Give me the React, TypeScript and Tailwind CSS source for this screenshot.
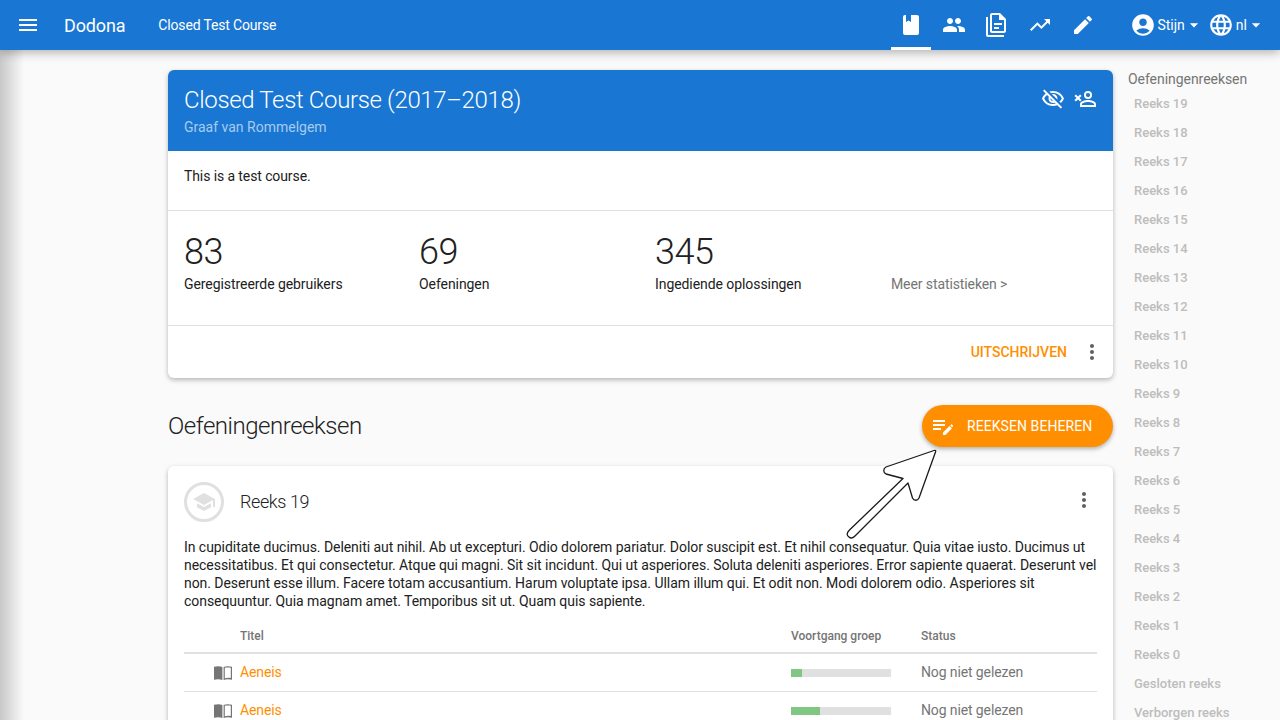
import { MdMenu, MdPeople, MdTrendingUp, MdEdit, MdAccountCircle, MdLanguage, MdArrowDropDown, MdOutlineVisibilityOff, MdMoreVert, MdSchool } from "react-icons/md";

const sidebarItems = ["Reeks 19", "Reeks 18", "Reeks 17", "Reeks 16", "Reeks 15", "Reeks 14", "Reeks 13", "Reeks 12", "Reeks 11", "Reeks 10", "Reeks 9", "Reeks 8", "Reeks 7", "Reeks 6", "Reeks 5", "Reeks 4", "Reeks 3", "Reeks 2", "Reeks 1", "Reeks 0", "Gesloten reeks", "Verborgen reeks"];

const stats = [
  { value: "83", label: "Geregistreerde gebruikers" },
  { value: "69", label: "Oefeningen" },
  { value: "345", label: "Ingediende oplossingen" },
];

const rows = [
  { title: "Aeneis", progress: 11 },
  { title: "Aeneis", progress: 29 },
];

function Mdi({ d, className }: { d: string; className?: string }) {
  return (
    <svg viewBox="0 0 24 24" fill="currentColor" className={className}>
      <path d={d} />
    </svg>
  );
}

function BookIcon() {
  return (
    <svg viewBox="0 0 18 14" className="w-[18px] h-[14px] text-[#757575]" fill="currentColor">
      <path d="M0 .8C2.8.1 6 0 8.4 1v13C6 13 2.8 13 0 13.7z" />
      <path d="M9.6 1C12 0 15.2.1 18 .8v12.9c-2.8-.7-6-.7-8.4.3zm1.2.8v10.4c2-.6 4.3-.7 6-.2V1.8c-1.8-.5-4-.5-6 0z" />
    </svg>
  );
}

export default function App() {
  return (
    <div className="relative h-screen overflow-hidden bg-[#fafafa] text-[14px] text-[#212121] font-['Roboto',sans-serif]">
      {/* drawer shadow on the left edge */}
      <div className="absolute left-0 top-0 bottom-0 w-[24px] bg-gradient-to-r from-[#c8c8c8] to-[#fafafa]" />

      {/* navbar */}
      <header className="relative z-10 h-[50px] bg-[#1976d2] text-white flex items-center shadow-[0_2px_10px_rgba(0,0,0,0.32)]">
        <MdMenu className="ml-[16px] w-[24px] h-[24px]" />
        <span className="ml-[24px] text-[18px] tracking-[-0.15px]">Dodona</span>
        <span className="ml-[33px] text-[14px] tracking-[-0.16px]">Closed Test Course</span>
        <nav className="ml-auto flex h-full gap-[3px]">
          <div className="w-[40px] flex items-center justify-center border-b-[3px] border-white pt-[3px]">
            <Mdi className="w-[24px] h-[24px]" d="M18,22A2,2 0 0,0 20,20V4C20,2.89 19.1,2 18,2H12V9L9.5,7.5L7,9V2H6A2,2 0 0,0 4,4V20A2,2 0 0,0 6,22H18Z" />
          </div>
          <div className="w-[40px] flex items-center justify-center"><MdPeople className="w-[24px] h-[24px]" /></div>
          <div className="w-[40px] -ml-[1px] flex items-center justify-center">
            <Mdi className="w-[24px] h-[24px]" d="M16 0H8C6.9 0 6 .9 6 2V18C6 19.1 6.9 20 8 20H20C21.1 20 22 19.1 22 18V6L16 0M20 18H8V2H15V7H20V18M4 4V22H20V24H4C2.9 24 2 23.1 2 22V4H4M10 10V12H18V10H10M10 14V16H15V14H10Z" />
          </div>
          <div className="w-[40px] ml-[1px] flex items-center justify-center"><MdTrendingUp className="w-[24px] h-[24px]" /></div>
          <div className="w-[40px] flex items-center justify-center"><MdEdit className="w-[24px] h-[24px]" /></div>
        </nav>
        <div className="ml-[28px] flex items-center">
          <MdAccountCircle className="w-[26px] h-[26px] -mx-[1px]" />
          <span className="ml-[2px] text-[14px]">Stijn</span>
          <MdArrowDropDown className="w-[20px] h-[20px] -ml-[1px] -mr-[5px]" />
        </div>
        <div className="ml-[10px] mr-[19px] flex items-center">
          <MdLanguage className="w-[26px] h-[26px] -mx-[1px]" />
          <span className="ml-[3px] text-[14px]">nl</span>
          <MdArrowDropDown className="w-[20px] h-[20px] -ml-[1px] -mr-[5px]" />
        </div>
      </header>

      <div className="relative flex pl-[168px] pt-[20px]">
        <main className="w-[945px] shrink-0">
          {/* course card */}
          <section className="rounded-[6px] bg-white shadow-[0_2px_5px_rgba(0,0,0,0.28)] overflow-hidden">
            <div className="h-[81px] bg-[#1976d2] text-white px-[16px] pt-[14px] flex justify-between">
              <div>
                <h1 className="text-[24px] font-light leading-[32px] tracking-[-0.35px]">Closed Test Course (2017–2018)</h1>
                <p className="text-[14px] leading-[20px] mt-[1px] text-[#a6cbf0]">Graaf van Rommelgem</p>
              </div>
              <div className="flex gap-[8px] h-[24px] mt-[3px]">
                <MdOutlineVisibilityOff className="w-[24px] h-[24px]" />
                <Mdi className="w-[24px] h-[24px]" d="M15,4A4,4 0 0,0 11,8A4,4 0 0,0 15,12A4,4 0 0,0 19,8A4,4 0 0,0 15,4M15,5.9C16.16,5.9 17.1,6.84 17.1,8C17.1,9.16 16.16,10.1 15,10.1A2.1,2.1 0 0,1 12.9,8A2.1,2.1 0 0,1 15,5.9M15,13C12.33,13 7,14.33 7,17V20H23V17C23,14.33 17.67,13 15,13M15,14.9C17.97,14.9 21.1,16.36 21.1,17V18.1H8.9V17C8.9,16.36 12,14.9 15,14.9M1.46,8.88L2.88,7.46L5,9.59L7.12,7.46L8.54,8.88L6.41,11L8.54,13.12L7.12,14.54L5,12.41L2.88,14.54L1.46,13.12L3.59,11L1.46,8.88Z" />
              </div>
            </div>
            <div className="h-[60px] px-[16px] pt-[15px] leading-[20px] tracking-[-0.1px] border-b border-[#e0e0e0]">This is a test course.</div>
            <div className="h-[115px] grid grid-cols-[235px_236px_236px_1fr] border-b border-[#e0e0e0]">
              {stats.map((s) => (
                <div key={s.label} className="pl-[16px] pt-[21px]">
                  <div className="text-[36px] font-light leading-[40px] tracking-[-0.5px]">{s.value}</div>
                  <div className="-mt-[2px] leading-[28px] tracking-[-0.07px]">{s.label}</div>
                </div>
              ))}
              <div className="pl-[16px] pt-[59px] leading-[28px] text-[#757575] tracking-[-0.1px]">Meer statistieken &gt;</div>
            </div>
            <div className="h-[52px] flex items-center justify-end pr-[9px]">
              <span className="font-medium text-[#ff8f00]">UITSCHRIJVEN</span>
              <MdMoreVert className="ml-[13px] w-[24px] h-[24px] text-[#616161]" />
            </div>
          </section>

          {/* section header */}
          <div className="mt-[27px] h-[42px] flex items-center justify-between">
            <h2 className="text-[24px] font-light tracking-[-0.47px]">Oefeningenreeksen</h2>
            <button className="w-[191px] h-[42px] rounded-full bg-[#ff8f00] text-white flex items-center pl-[9px] shadow-[0_2px_4px_rgba(0,0,0,0.3)]">
              <svg viewBox="0 0 22 22" className="w-[22px] h-[22px]" fill="currentColor">
                <path d="M2 5h12v2H2zM2 9h12v2H2zM2 13h8v2H2z" />
                <path d="M12 20v-2.4l6.5-6.5 2.4 2.4-6.5 6.5zM19.2 10.4l1-1c.3-.3.6-.3.8 0l1 1c.3.3.3.5 0 .8l-1 1z" />
              </svg>
              <span className="ml-[14px] text-[14px] tracking-[0.07px]">REEKSEN BEHEREN</span>
            </button>
          </div>

          {/* series card */}
          <section className="mt-[19px] rounded-[6px] bg-white shadow-[0_2px_5px_rgba(0,0,0,0.28)] px-[16px] pt-[16px] pb-[40px]">
            <div className="flex items-center h-[40px]">
              <div className="w-[40px] h-[40px] rounded-full border-[3px] border-[#e0e0e0] flex items-center justify-center">
                <MdSchool className="w-[24px] h-[24px] text-[#e0e0e0]" />
              </div>
              <h3 className="ml-[16px] text-[18px] font-light tracking-[-0.4px] -mt-[1px]">Reeks 19</h3>
              <MdMoreVert className="ml-auto w-[24px] h-[24px] -mt-[4px] mr-[1px] text-[#616161]" />
            </div>
            <p className="mt-[16px] leading-[18px] tracking-[-0.05px] text-[#212121]">
              In cupiditate ducimus. Deleniti aut nihil. Ab ut excepturi. Odio dolorem pariatur. Dolor suscipit est. Et nihil consequatur. Quia vitae iusto. Ducimus ut necessitatibus. Et qui consectetur. Atque qui magni. Sit sit incidunt. Qui ut asperiores. Soluta deleniti asperiores. Error sapiente quaerat. Deserunt vel non. Deserunt esse illum. Facere totam accusantium. Harum voluptate ipsa. Ullam illum qui. Et odit non. Modi dolorem odio. Asperiores sit consequuntur. Quia magnam amet. Temporibus sit ut. Quam quis sapiente.
            </p>
            <div className="mt-[8px]">
              <div className="h-[36px] pt-[2px] flex items-center border-b-2 border-[#e0e0e0] text-[12px] font-medium text-[#757575]">
                <span className="ml-[56px] w-[551px]">Titel</span>
                <span className="w-[130px]">Voortgang groep</span>
                <span>Status</span>
              </div>
              {rows.map((r, i) => (
                <div key={i} className="h-[38px] flex items-center border-b border-[#e0e0e0]">
                  <div className="w-[48px] flex justify-end"><BookIcon /></div>
                  <span className="ml-[8px] text-[#ff8f00] w-[551px] tracking-[-0.1px]">{r.title}</span>
                  <div className="w-[100px] h-[8px] bg-[#e0e0e0]">
                    <div className="h-full bg-[#81c784]" style={{ width: `${r.progress}%` }} />
                  </div>
                  <span className="ml-[30px] text-[#757575] tracking-[-0.12px]">Nog niet gelezen</span>
                </div>
              ))}
            </div>
          </section>
        </main>

        {/* series nav */}
        <aside className="ml-[15px] -mt-[1px] w-[137px]">
          <div className="text-[#757575] leading-[20px] tracking-[-0.05px]">Oefeningenreeksen</div>
          <ul>
            {sidebarItems.map((s) => (
              <li key={s} className="h-[29px] leading-[29px] pl-[6px] text-[13px] font-medium text-[#bdbdbd]">{s}</li>
            ))}
          </ul>
        </aside>
      </div>

      {/* arrow pointing at the button */}
      <svg className="absolute left-[840px] top-[440px] w-[110px] h-[110px] z-20" viewBox="0 0 110 110" fill="none">
        <path
          d="M94 10.5 L46 27 C43 28.5 43 32.5 46 34 L63 38.5 L9.5 90 C6 93.5 7 95.5 9 97 C10.5 98.5 12.5 98.5 15 96 L68 43 L72.5 58 C74 61 77.5 61 79 58 L95.5 12 C96 10.5 95.5 10 94 10.5 Z"
          fill="#ffffff"
          stroke="#1a1a1a"
          strokeWidth="1.3"
          strokeLinejoin="round"
        />
      </svg>
    </div>
  );
}
